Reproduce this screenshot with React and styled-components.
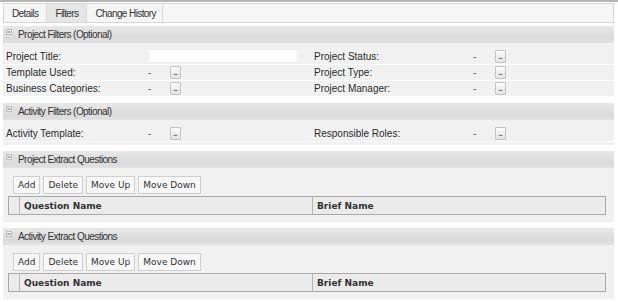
import styled, { createGlobalStyle } from "styled-components";

const GlobalStyle = createGlobalStyle`
  body {
    margin: 0;
    background: #ffffff;
    font-family: "Liberation Sans", Arial, sans-serif;
    color: #222;
  }
`;

const projectFilters = [
  ["Project Title:", "input", "Project Status:", "pick"],
  ["Template Used:", "pick", "Project Type:", "pick"],
  ["Business Categories:", "pick", "Project Manager:", "pick"],
];

const activityFilters = [["Activity Template:", "pick", "Responsible Roles:", "pick"]];

function Collapse() {
  return (
    <svg width="6" height="6" viewBox="0 0 6 6">
      <rect x="0.5" y="0.5" width="5" height="5" fill="#f6f6f6" stroke="#bcbcbc" />
      <line x1="1.5" y1="3" x2="4.5" y2="3" stroke="#6a6a6a" />
    </svg>
  );
}

function Value({ kind }) {
  if (kind === "input") return <TextInput type="text" />;
  return (
    <ValueWrap>
      <Dash>-</Dash>
      <Picker>...</Picker>
    </ValueWrap>
  );
}

function FilterSection({ title, rows, tall, tail }) {
  return (
    <Section>
      <Header>
        <Collapse />
        <span>{title}</span>
      </Header>
      <FilterBody $tail={tail}>
        {rows.map((r, i) => (
          <FilterRow key={i} $tall={tall === "all" || (tall === "first" && i === 0)}>
            <Label>{r[0]}</Label>
            <Cell>
              <Value kind={r[1]} />
            </Cell>
            <Label $right>{r[2]}</Label>
            <Cell>
              <Value kind={r[3]} />
            </Cell>
          </FilterRow>
        ))}
      </FilterBody>
    </Section>
  );
}

function QuestionSection({ title }) {
  return (
    <Section>
      <Header>
        <Collapse />
        <span>{title}</span>
      </Header>
      <QuestionBody>
        <Toolbar>
          <ToolButton>Add</ToolButton>
          <ToolButton>Delete</ToolButton>
          <ToolButton>Move Up</ToolButton>
          <ToolButton>Move Down</ToolButton>
        </Toolbar>
        <GridHead>
          <HeadCell />
          <HeadCell>Question Name</HeadCell>
          <HeadCell>Brief Name</HeadCell>
        </GridHead>
      </QuestionBody>
    </Section>
  );
}

export default function App() {
  return (
    <>
      <GlobalStyle />
      <Page>
        <Tabs>
          <Tab>Details</Tab>
          <Tab $active>Filters</Tab>
          <Tab>Change History</Tab>
        </Tabs>
        <FilterSection title="Project Filters (Optional)" rows={projectFilters} tall="first" />
        <FilterSection title="Activity Filters (Optional)" rows={activityFilters} tall="all" tail />
        <QuestionSection title="Project Extract Questions" />
        <QuestionSection title="Activity  Extract Questions" />
      </Page>
    </>
  );
}

const Page = styled.div`
  border-top: 2px solid #b4b4b4;
  padding: 1px 4px 0 3px;
  display: flex;
  flex-direction: column;
`;

const Tabs = styled.div`
  display: flex;
  height: 18px;
  border: 1px solid #d6d6d6;
  background: #f6f6f6;
  margin-bottom: 3px;
`;

const Tab = styled.div`
  display: flex;
  align-items: center;
  padding: 0 8px;
  font-size: 10px;
  letter-spacing: -0.6px;
  color: #333;
  border-right: 1px solid #dadada;
  background: ${(p) => (p.$active ? "#e6e6e6" : "#f6f6f6")};

  &:last-child {
    padding-right: 6px;
  }
`;

const Section = styled.div`
  display: flex;
  flex-direction: column;
  margin-bottom: 6px;
`;

const Header = styled.div`
  display: flex;
  align-items: center;
  gap: 6px;
  height: 17px;
  padding-left: 3px;
  background: linear-gradient(#e8e8e8, #dbdbdb 70%, #e2e2e2);
  font-size: 10px;
  letter-spacing: -0.55px;
  color: #333;

  & svg {
    margin-top: -6px;
  }
`;

const FilterBody = styled.div`
  background: #f1f1f1;
  padding-bottom: ${(p) => (p.$tail ? "3px" : "0")};
`;

const FilterRow = styled.div`
  display: grid;
  grid-template-columns: 145px 162px 163px 1fr;
  height: ${(p) => (p.$tall ? "16px" : "15px")};
  padding-top: ${(p) => (p.$tall ? "5px" : "0")};
  border-bottom: 1px solid #ffffff;
  align-items: center;
`;

const Label = styled.div`
  font-size: 10px;
  color: #2a2a2a;
  padding-left: ${(p) => (p.$right ? "4px" : "3px")};
`;

const Cell = styled.div`
  display: flex;
  align-items: center;
`;

const TextInput = styled.input`
  width: 150px;
  height: 14px;
  padding: 0;
  border: 1px solid #eeeeee;
  background: #ffffff;
  box-sizing: border-box;
  outline: none;
`;

const ValueWrap = styled.div`
  display: flex;
  align-items: center;
`;

const Dash = styled.span`
  width: 22px;
  font-size: 10px;
  color: #666;
`;

const Picker = styled.span`
  width: 9px;
  height: 11px;
  border: 1px solid #c4c4c4;
  border-radius: 1px;
  background: linear-gradient(#fbfbfb, #e2e2e2);
  font-size: 8px;
  font-weight: bold;
  line-height: 12px;
  text-align: center;
  color: #5d6b80;
  letter-spacing: -1px;
  text-indent: -1px;
  overflow: hidden;
`;

const QuestionBody = styled.div`
  background: #f1f1f1;
  padding: 8px 8px 7px 5px;
  display: flex;
  flex-direction: column;
  gap: 2px;
`;

const Toolbar = styled.div`
  display: flex;
  gap: 3px;
  padding-left: 5px;
  height: 18px;
`;

const ToolButton = styled.button`
  height: 18px;
  padding: 0 4px;
  border: 1px solid #cfcfcf;
  border-radius: 0;
  background: #f8f8f8;
  font-family: "DejaVu Sans", Verdana, sans-serif;
  font-size: 9px;
  color: #333;
`;

const GridHead = styled.div`
  display: grid;
  grid-template-columns: 10px 293px 1fr;
  height: 17px;
  border: 1px solid #a8a8a8;
  background: #ebebeb;
`;

const HeadCell = styled.div`
  display: flex;
  align-items: center;
  padding-left: 4px;
  border-left: 1px solid #b4b4b4;
  font-family: "DejaVu Sans", Verdana, sans-serif;
  font-size: 9px;
  font-weight: bold;
  color: #333;

  &:first-child {
    border-left: none;
    padding: 0;
  }
`;
